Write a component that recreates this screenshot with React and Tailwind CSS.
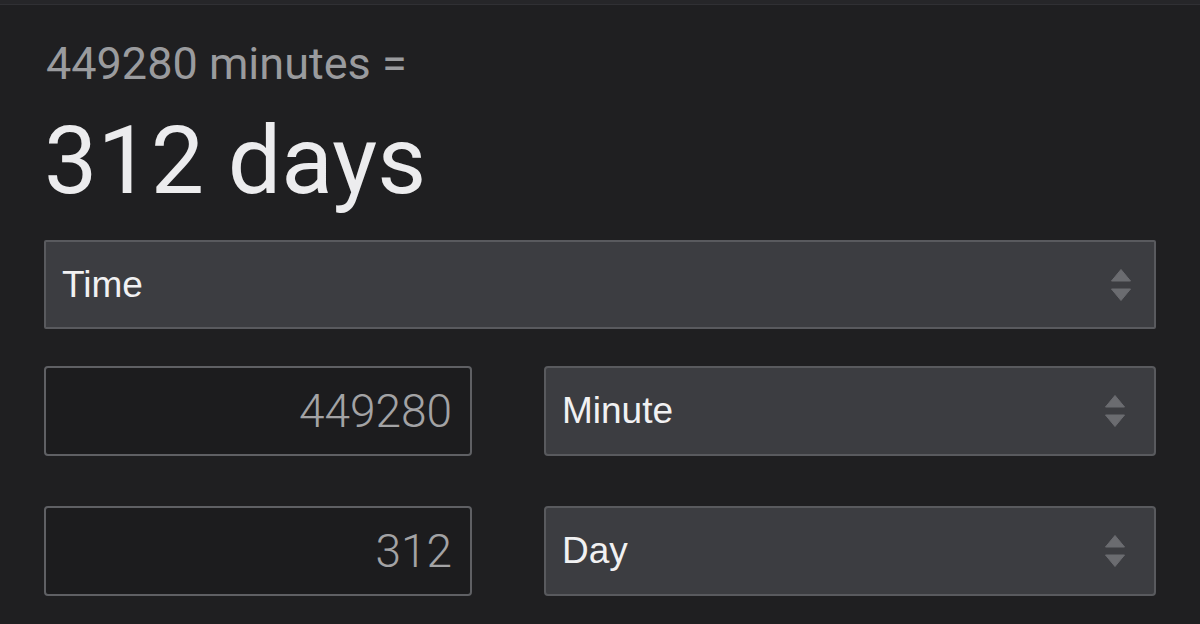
import React from "react";

function Arrows() {
  return (
    <svg width="20" height="32" viewBox="0 0 20 32" className="shrink-0">
      <path d="M10 0.5 L19.5 12 L0.5 12 Z" fill="#6b6c70" strokeLinejoin="round" stroke="#6b6c70" strokeWidth="1" />
      <path d="M0.5 20 L19.5 20 L10 31.5 Z" fill="#6b6c70" strokeLinejoin="round" stroke="#6b6c70" strokeWidth="1" />
    </svg>
  );
}

function Select({ label, className = "", arrowPad = "pr-[29px]" }) {
  return (
    <div
      className={`flex items-center justify-between bg-[#3c3d41] border-2 border-[#595a5e] pl-[16px] ${arrowPad} ${className}`}
    >
      <span className="text-[37px] text-[#f1f1f2]" style={{ fontFamily: '"Liberation Sans", Arial, sans-serif' }}>
        {label}
      </span>
      <Arrows />
    </div>
  );
}

function NumInput({ value }) {
  return (
    <div className="w-[428px] h-[90px] shrink-0 flex items-center justify-end border-2 border-[#5f6064] rounded-[4px] bg-[#1c1c1e] pr-[18px]">
      <span className="text-[46px] leading-none text-[#a3a3a5]" style={{ fontFamily: 'Roboto, sans-serif', fontWeight: 300 }}>
        {value}
      </span>
    </div>
  );
}

export default function App() {
  return (
    <div className="w-[1200px] h-[624px] overflow-hidden bg-[#1f1f21]" style={{ fontFamily: 'Roboto, "Liberation Sans", sans-serif' }}>
      <div className="h-[5px] bg-[#262629] border-b border-[#303034]" />
      <div className="px-[44px]">
        <div className="mt-[36px] text-[45px] leading-none text-[#9a9b9e] pl-[2px]">449280 minutes =</div>
        <div className="mt-[27px] text-[95px] leading-none text-[#ececee]">312 days</div>
        <Select label="Time" className="mt-[32px] h-[89px] rounded-[2px]" arrowPad="pr-[23px]" />
        <div className="mt-[37px] flex gap-[72px]">
          <NumInput value="449280" />
          <Select label="Minute" className="flex-1 h-[90px] rounded-[4px]" />
        </div>
        <div className="mt-[50px] flex gap-[72px]">
          <NumInput value="312" />
          <Select label="Day" className="flex-1 h-[90px] rounded-[4px]" />
        </div>
      </div>
    </div>
  );
}
